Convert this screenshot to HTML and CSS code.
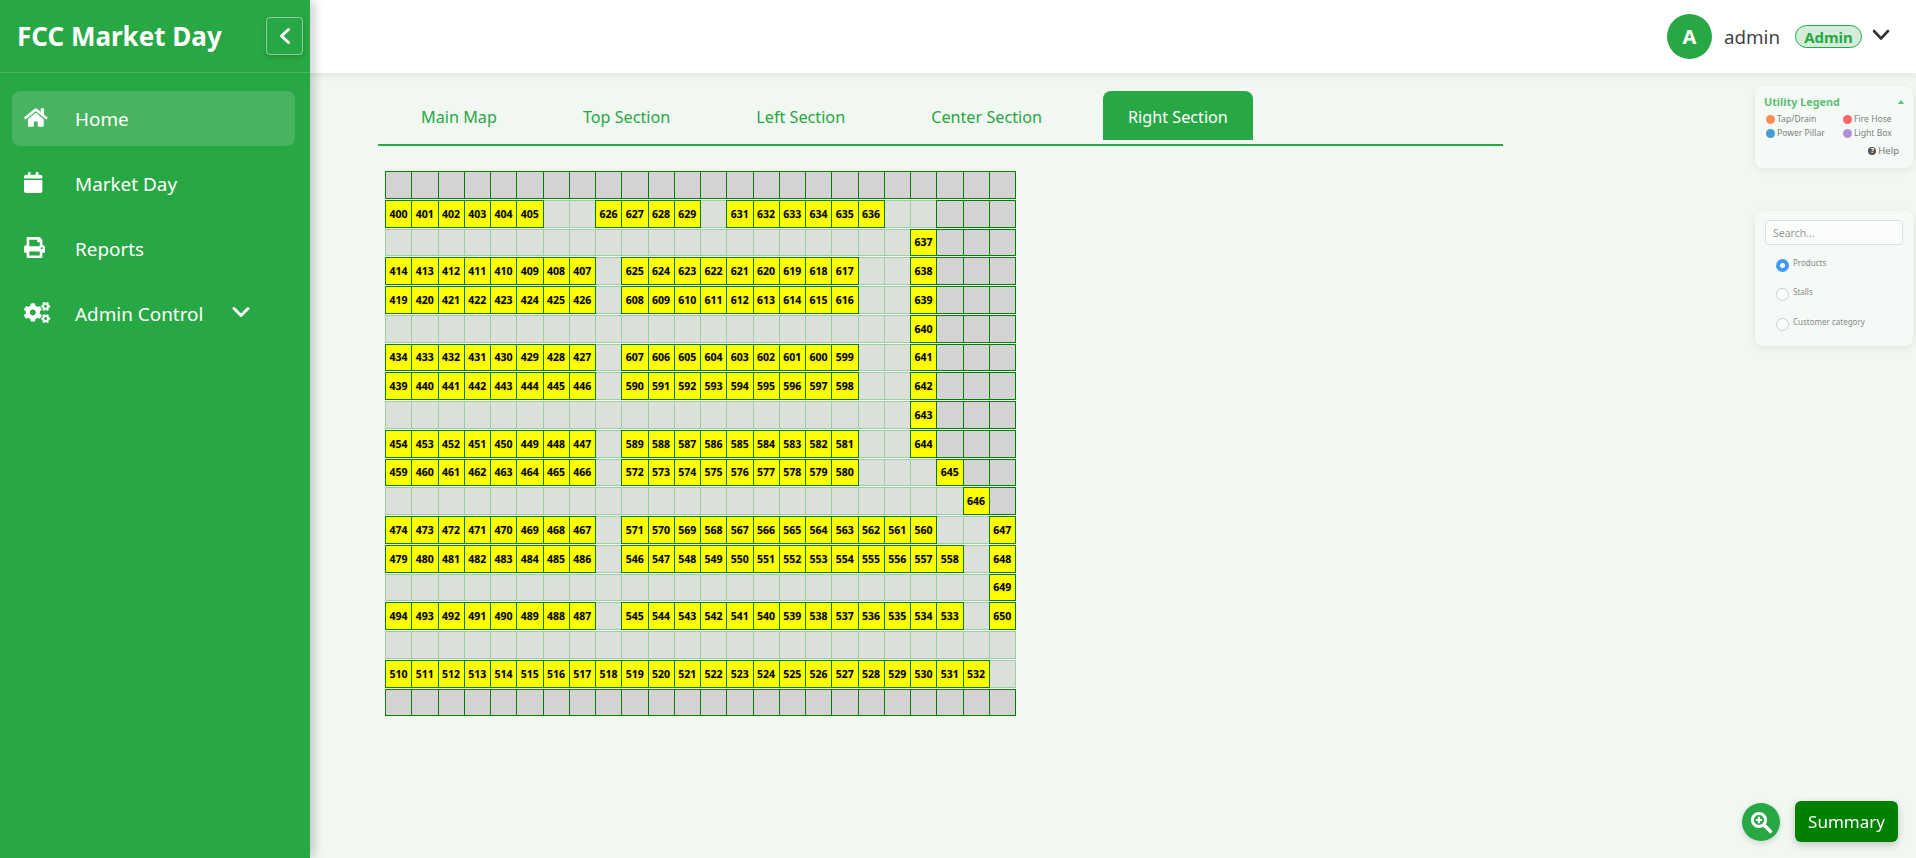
FILE: index.html
```html
<!DOCTYPE html>
<html lang="en">
<head>
  <meta charset="UTF-8" />
  <title>FCC Market Day</title>
  <link rel="stylesheet" href="styles.css">
</head>
<body>
  <aside class="sidebar">
    <div class="brand">
      <span class="brand-name">FCC Market Day</span>
      <button class="collapse-btn">
        <svg viewBox="0 0 18 18" width="18" height="18"><polyline points="12.5,2.5 5.5,9 12.5,15.5" fill="none" stroke="#fff" stroke-width="3" stroke-linecap="round" stroke-linejoin="round"/></svg>
      </button>
    </div>
    <nav>
      <ul>
        <li class="active">
          <svg class="nav-icon" viewBox="0 0 576 512" preserveAspectRatio="xMinYMid meet"><path d="M280.37 148.26L96 300.11V464a16 16 0 0 0 16 16l112.06-.29a16 16 0 0 0 15.92-16V368a16 16 0 0 1 16-16h64a16 16 0 0 1 16 16v95.64a16 16 0 0 0 16 16.05L464 480a16 16 0 0 0 16-16V300L295.67 148.26a12.19 12.19 0 0 0-15.3 0zM571.6 251.47L488 182.56V44.05a12 12 0 0 0-12-12h-56a12 12 0 0 0-12 12v72.61L318.47 43a48 48 0 0 0-61 0L4.34 251.47a12 12 0 0 0-1.6 16.9l25.5 31A12 12 0 0 0 45.15 301l235.22-193.74a12.19 12.19 0 0 1 15.3 0L530.9 301a12 12 0 0 0 16.9-1.6l25.5-31a12 12 0 0 0-1.7-16.93z"/></svg>
          <span>Home</span>
        </li>
        <li>
          <svg class="nav-icon" viewBox="0 0 448 512" preserveAspectRatio="xMinYMid meet"><path d="M12 192h424c6.6 0 12 5.4 12 12v260c0 26.5-21.5 48-48 48H48c-26.5 0-48-21.5-48-48V204c0-6.6 5.4-12 12-12zm436-44v-36c0-26.5-21.5-48-48-48h-48V12c0-6.6-5.4-12-12-12h-40c-6.6 0-12 5.4-12 12v52H160V12c0-6.6-5.4-12-12-12h-40c-6.6 0-12 5.4-12 12v52H48C21.5 64 0 85.5 0 112v36c0 6.6 5.4 12 12 12h424c6.6 0 12-5.4 12-12z"/></svg>
          <span>Market Day</span>
        </li>
        <li>
          <svg class="nav-icon" viewBox="0 0 512 512" preserveAspectRatio="xMinYMid meet"><path d="M448 192V77.25c0-8.49-3.37-16.62-9.37-22.63L393.37 9.37c-6-6-14.14-9.37-22.63-9.37H96C78.33 0 64 14.33 64 32v160c-35.35 0-64 28.65-64 64v112c0 8.84 7.16 16 16 16h48v96c0 17.67 14.33 32 32 32h320c17.67 0 32-14.33 32-32v-96h48c8.84 0 16-7.16 16-16V256c0-35.35-28.65-64-64-64zm-64 256H128v-96h256v96zm0-224H128V64h192v48c0 8.84 7.16 16 16 16h48v96zm48 72c-13.25 0-24-10.75-24-24 0-13.26 10.75-24 24-24s24 10.74 24 24c0 13.25-10.75 24-24 24z"/></svg>
          <span>Reports</span>
        </li>
        <li>
          <svg class="nav-icon" viewBox="0 0 640 512" preserveAspectRatio="xMinYMid meet"><path d="M512.1 191l-8.2 14.3c-3 5.3-9.4 7.5-15.1 5.4-11.8-4.4-22.6-10.7-32.1-18.6-4.6-3.8-5.8-10.5-2.8-15.7l8.2-14.3c-6.9-8-12.3-17.3-15.9-27.4h-16.5c-6 0-11.2-4.3-12.2-10.3-2-12-2.1-24.6 0-37.1 1-6 6.2-10.4 12.2-10.4h16.5c3.6-10.1 9-19.4 15.9-27.4l-8.2-14.3c-3-5.2-1.9-11.9 2.8-15.7 9.5-7.9 20.4-14.2 32.1-18.6 5.7-2.1 12.1.1 15.1 5.4l8.2 14.3c10.5-1.9 21.2-1.9 31.7 0L552 6.3c3-5.3 9.4-7.5 15.1-5.4 11.8 4.4 22.6 10.7 32.1 18.6 4.6 3.8 5.8 10.5 2.8 15.7l-8.2 14.3c6.9 8 12.3 17.3 15.9 27.4h16.5c6 0 11.2 4.3 12.2 10.3 2 12 2.1 24.6 0 37.1-1 6-6.2 10.4-12.2 10.4h-16.5c-3.6 10.1-9 19.4-15.9 27.4l8.2 14.3c3 5.2 1.9 11.9-2.8 15.7-9.5 7.9-20.4 14.2-32.1 18.6-5.7 2.1-12.1-.1-15.1-5.4l-8.2-14.3c-10.4 1.9-21.2 1.9-31.7 0zm-10.5-58.8c38.5 29.6 82.4-14.3 52.8-52.8-38.5-29.7-82.4 14.3-52.8 52.8zM386.3 286.1l33.7 16.8c10.1 5.8 14.5 18.1 10.5 29.1-8.9 24.2-26.4 46.4-42.6 65.8-7.4 8.9-20.2 11.1-30.3 5.3l-29.1-16.8c-16 13.7-34.6 24.6-54.9 31.7v33.6c0 11.6-8.3 21.6-19.7 23.6-24.6 4.2-50.4 4.4-75.9 0-11.5-2-20-11.9-20-23.6V418c-20.3-7.2-38.9-18-54.9-31.7L74 403c-10 5.8-22.9 3.6-30.3-5.3-16.2-19.4-33.3-41.6-42.2-65.7-4-10.9.4-23.2 10.5-29.1l33.3-16.8c-3.9-20.9-3.9-42.4 0-63.4L12 205.8c-10.1-5.8-14.6-18.1-10.5-29 8.9-24.2 26-46.4 42.2-65.8 7.4-8.9 20.2-11.1 30.3-5.3l29.1 16.8c16-13.7 34.6-24.6 54.9-31.7V57.1c0-11.5 8.2-21.5 19.6-23.5 24.6-4.2 50.5-4.4 76-.1 11.5 2 20 11.9 20 23.6v33.6c20.3 7.2 38.9 18 54.9 31.7l29.1-16.8c10-5.8 22.9-3.6 30.3 5.3 16.2 19.4 33.2 41.6 42.1 65.8 4 10.9.1 23.2-10 29.1l-33.7 16.8c3.9 21 3.9 42.5 0 63.5zm-117.6 21.1c59.2-77-28.7-164.9-105.7-105.7-59.2 77 28.7 164.9 105.7 105.7zm243.4 182.7l-8.2 14.3c-3 5.3-9.4 7.5-15.1 5.4-11.8-4.4-22.6-10.7-32.1-18.6-4.6-3.8-5.8-10.5-2.8-15.7l8.2-14.3c-6.9-8-12.3-17.3-15.9-27.4h-16.5c-6 0-11.2-4.3-12.2-10.3-2-12-2.1-24.6 0-37.1 1-6 6.2-10.4 12.2-10.4h16.5c3.6-10.1 9-19.4 15.9-27.4l-8.2-14.3c-3-5.2-1.9-11.9 2.8-15.7 9.5-7.9 20.4-14.2 32.1-18.6 5.7-2.1 12.1.1 15.1 5.4l8.2 14.3c10.5-1.9 21.2-1.9 31.7 0l8.2-14.3c3-5.3 9.4-7.5 15.1-5.4 11.8 4.4 22.6 10.7 32.1 18.6 4.6 3.8 5.8 10.5 2.8 15.7l-8.2 14.3c6.9 8 12.3 17.3 15.9 27.4h16.5c6 0 11.2 4.3 12.2 10.3 2 12 2.1 24.6 0 37.1-1 6-6.2 10.4-12.2 10.4h-16.5c-3.6 10.1-9 19.4-15.9 27.4l8.2 14.3c3 5.2 1.9 11.9-2.8 15.7-9.5 7.9-20.4 14.2-32.1 18.6-5.7 2.1-12.1-.1-15.1-5.4l-8.2-14.3c-10.4 1.9-21.2 1.9-31.7 0zM501.6 431c38.5 29.6 82.4-14.3 52.8-52.8-38.5-29.6-82.4 14.3-52.8 52.8z"/></svg>
          <span>Admin Control</span>
          <svg class="nav-caret" viewBox="0 0 18 12"><polyline points="2,2.5 9,9.5 16,2.5" fill="none" stroke="#fff" stroke-width="3" stroke-linecap="round" stroke-linejoin="round"/></svg>
        </li>
      </ul>
    </nav>
  </aside>

  <div class="page">
    <header>
      <div class="avatar">A</div>
      <span class="user-name">admin</span>
      <span class="role-badge">Admin</span>
      <svg class="user-caret" viewBox="0 0 18 12"><polyline points="2,2 9,9.5 16,2" fill="none" stroke="#333" stroke-width="2.6" stroke-linecap="round" stroke-linejoin="round"/></svg>
    </header>

    <div class="content">
      <main class="map-area">
        <ul class="tabs">
          <li>Main Map</li>
          <li>Top Section</li>
          <li>Left Section</li>
          <li>Center Section</li>
          <li class="active">Right Section</li>
        </ul>
        <div class="stall-grid" id="stall-grid"></div>
      </main>

      <div class="side-rail">
        <section class="card legend">
          <div class="legend-title">
            <span>Utility Legend</span>
            <i class="legend-arrow"></i>
          </div>
          <div class="legend-items">
            <span><i class="dot tap"></i>Tap/Drain</span>
            <span><i class="dot fire"></i>Fire Hose</span>
            <span><i class="dot power"></i>Power Pillar</span>
            <span><i class="dot light"></i>Light Box</span>
          </div>
          <div class="legend-help"><i class="help-icon">?</i>Help</div>
        </section>

        <section class="card filter">
          <input class="search" type="text" placeholder="Search...">
          <label class="radio-row"><i class="radio checked"></i>Products</label>
          <label class="radio-row"><i class="radio"></i>Stalls</label>
          <label class="radio-row"><i class="radio"></i>Customer category</label>
        </section>
      </div>
    </div>
  </div>

  <div class="float-actions">
    <button class="zoom-btn">
      <svg viewBox="0 0 24 24" width="24" height="24">
        <circle cx="10" cy="10" r="6.6" fill="none" stroke="#fff" stroke-width="3"/>
        <line x1="15.5" y1="15.5" x2="21.5" y2="21.5" stroke="#fff" stroke-width="3.4" stroke-linecap="round"/>
        <path d="M10 6.8v6.4M6.8 10h6.4" stroke="#fff" stroke-width="2.2"/>
      </svg>
    </button>
    <button class="summary-btn">Summary</button>
  </div>

  <script src="script.js"></script>
</body>
</html>
```

FILE: styles.css
```css
* {
  box-sizing: border-box;
}

body {
  font-family: "Noto Sans", "Open Sans", sans-serif;
  margin: 0;
  height: 100vh;
  display: flex;
  overflow: hidden;
  background: #f1f7f1;
}

.sidebar {
  width: 310px;
  flex-shrink: 0;
  background: #28a745;
  color: white;
  box-shadow: 4px 0 10px rgba(0, 0, 0, 0.2);
  z-index: 2;
}

.brand {
  height: 73px;
  display: flex;
  align-items: center;
  justify-content: space-between;
  padding: 0 7px 0 17px;
  border-bottom: 1px solid rgba(255, 255, 255, 0.15);
}

.brand-name {
  font-size: 26px;
  font-weight: 700;
}

.collapse-btn {
  width: 37px;
  height: 38px;
  display: flex;
  align-items: center;
  justify-content: center;
  padding: 0;
  background: transparent;
  border: 1px solid rgba(255, 255, 255, 0.45);
  border-radius: 4px;
  box-shadow: 0 2px 5px rgba(0, 0, 0, 0.15);
}

nav ul {
  list-style: none;
  margin: 0;
  padding: 18px 15px 0 12px;
}

nav li {
  height: 55px;
  margin-bottom: 10px;
  display: flex;
  align-items: center;
  padding-left: 12px;
  border-radius: 8px;
  font-size: 18.9px;
}

nav li.active {
  background: rgba(255, 255, 255, 0.15);
}

.nav-icon {
  width: 27px;
  height: 21px;
  margin-right: 24px;
  fill: white;
  flex-shrink: 0;
  position: relative;
  top: -1px;
}

.nav-caret {
  width: 18px;
  height: 12px;
  margin-left: 29px;
  position: relative;
  top: -2px;
}

.page {
  flex: 1;
  min-width: 0;
  display: flex;
  flex-direction: column;
}

header {
  height: 73px;
  background: white;
  display: flex;
  align-items: center;
  padding-right: 26px;
  justify-content: flex-end;
  box-shadow: 0 2px 8px rgba(0, 0, 0, 0.08);
}

.avatar {
  width: 45px;
  height: 45px;
  border-radius: 50%;
  background: #28a745;
  color: white;
  font-size: 20px;
  font-weight: 700;
  display: flex;
  align-items: center;
  justify-content: center;
}

.user-name {
  margin-left: 12px;
  font-size: 18.8px;
  color: #444;
}

.role-badge {
  margin-left: 15px;
  height: 23px;
  width: 67px;
  display: flex;
  align-items: center;
  justify-content: center;
  border: 1px solid #28a745;
  border-radius: 12px;
  background: #d4edda;
  color: #28a745;
  font-size: 15px;
  font-weight: 700;
}

.user-caret {
  width: 18px;
  height: 12px;
  margin-left: 10px;
  margin-top: -4px;
}

.content {
  flex: 1;
  display: flex;
  justify-content: space-between;
}

.map-area {
  width: 1125px;
  margin-left: 68px;
  padding-top: 18px;
}

.tabs {
  list-style: none;
  display: flex;
  margin: 0;
  padding: 0 0 4px 18px;
  border-bottom: 2px solid #28a745;
}

.tabs li {
  height: 49px;
  padding: 2px 25px 0;
  margin-right: 36px;
  display: flex;
  align-items: center;
  color: #28a745;
  font-size: 16.2px;
  border-radius: 8px 8px 0 0;
}

.tabs li.active {
  background: #28a745;
  color: white;
}

.stall-grid {
  margin: 25px 0 0 7px;
  display: grid;
  grid-template-columns: repeat(24, 26.25px);
  grid-auto-rows: 27.75px;
  row-gap: 1px;
}

.stall {
  width: calc(100% + 1px);
  display: flex;
  align-items: center;
  justify-content: center;
  border: 1px solid #008000;
  font-size: 10.5px;
  font-weight: 700;
  color: black;
}

.stall.blocked {
  background: #d3d3d3;
}

.stall.free {
  background: #dbe0db;
  border-color: #9ccfa6;
}

.stall.taken {
  background: yellow;
  text-shadow: 0 1px 3px rgba(0, 0, 0, 0.15);
  z-index: 1;
}

.side-rail {
  width: 158px;
  margin-right: 3px;
  padding-top: 13px;
  display: flex;
  flex-direction: column;
  gap: 43px;
}

.card {
  background: #f6faf7;
  border-radius: 8px;
  box-shadow: 0 2px 8px rgba(0, 0, 0, 0.07);
}

.legend {
  height: 82px;
  padding: 8px 9px;
}

.legend-title {
  display: flex;
  align-items: center;
  justify-content: space-between;
  color: #5cbf75;
  font-size: 10.8px;
  font-weight: 700;
}

.legend-arrow {
  width: 0;
  height: 0;
  border-left: 3.5px solid transparent;
  border-right: 3.5px solid transparent;
  border-bottom: 4px solid #5cbf75;
}

.legend-items {
  display: grid;
  grid-template-columns: 77px auto;
  margin-top: 3px;
  padding-left: 2px;
  color: #808080;
  font-size: 8.6px;
  line-height: 14px;
}

.legend-items span {
  display: flex;
  align-items: center;
}

.dot {
  width: 9px;
  height: 9px;
  border-radius: 50%;
  margin-right: 2px;
}

.dot.tap { background: #ff8c5a; }
.dot.fire { background: #ff6666; }
.dot.power { background: #4a9bd1; }
.dot.light { background: #b08fd8; }

.legend-help {
  display: flex;
  align-items: center;
  justify-content: flex-end;
  margin: 4px 5px 0 0;
  color: #777;
  font-size: 9.5px;
}

.help-icon {
  width: 8px;
  height: 8px;
  margin-right: 2px;
  border-radius: 50%;
  background: #555;
  color: white;
  font-size: 7px;
  font-style: normal;
  font-weight: 700;
  line-height: 8px;
  text-align: center;
}

.filter {
  height: 135px;
  padding: 9px 10px;
}

.search {
  display: block;
  width: 138px;
  height: 25px;
  padding: 0 7px;
  margin-bottom: 11px;
  border: 1px solid #d8e2dc;
  border-radius: 4px;
  background: #fbfdfb;
  font-family: inherit;
  font-size: 10.5px;
}

.search::placeholder {
  color: #999;
}

.radio-row {
  height: 29.4px;
  display: flex;
  align-items: flex-start;
  padding: 1px 0 0 11px;
  color: #888;
  font-size: 8px;
  line-height: 12px;
}

.radio {
  width: 13px;
  height: 13px;
  margin: 2px 4px 0 0;
  border: 1px solid #c8ced0;
  border-radius: 50%;
  background: #fbfdfb;
}

.radio.checked {
  border: 4px solid #3f9bff;
  background: white;
}

.float-actions {
  position: fixed;
  right: 18px;
  bottom: 16px;
  display: flex;
  align-items: center;
  gap: 15px;
}

.zoom-btn {
  width: 38px;
  height: 38px;
  display: flex;
  align-items: center;
  justify-content: center;
  padding: 0;
  border: none;
  border-radius: 50%;
  background: #28a745;
  box-shadow: 0 2px 6px rgba(0, 0, 0, 0.15);
}

.summary-btn {
  width: 103px;
  height: 41px;
  border: none;
  border-radius: 6px;
  background: #008000;
  color: white;
  font-family: inherit;
  font-size: 17px;
  box-shadow: 0 3px 8px rgba(0, 0, 0, 0.2);
}
```

FILE: script.js
```js
// # = blocked, . = free, number or first-last = run of taken stalls
const rows = [
  "#*24",
  "400-405 .*2 626-629 . 631-636 .*2 #*3",
  ".*20 637 #*3",
  "414-407 . 625-617 .*2 638 #*3",
  "419-426 . 608-616 .*2 639 #*3",
  ".*20 640 #*3",
  "434-427 . 607-599 .*2 641 #*3",
  "439-446 . 590-598 .*2 642 #*3",
  ".*20 643 #*3",
  "454-447 . 589-581 .*2 644 #*3",
  "459-466 . 572-580 .*3 645 #*2",
  ".*22 646 #",
  "474-467 . 571-560 .*2 647",
  "479-486 . 546-558 . 648",
  ".*23 649",
  "494-487 . 545-533 . 650",
  ".*24",
  "510-532 .",
  "#*24"
];

const grid = document.getElementById("stall-grid");

function addCell(type, label) {
  const cell = document.createElement("div");
  cell.className = "stall " + type;
  cell.textContent = label || "";
  grid.appendChild(cell);
}

rows.forEach(row => {
  row.split(" ").forEach(part => {
    if (part[0] === "#" || part[0] === ".") {
      const count = parseInt(part.split("*")[1]) || 1;
      for (let i = 0; i < count; i++) {
        addCell(part[0] === "#" ? "blocked" : "free");
      }
    } else {
      const ends = part.split("-").map(Number);
      const last = ends.length > 1 ? ends[1] : ends[0];
      const step = last >= ends[0] ? 1 : -1;
      for (let n = ends[0]; n !== last + step; n += step) {
        addCell("taken", n);
      }
    }
  });
});
```
